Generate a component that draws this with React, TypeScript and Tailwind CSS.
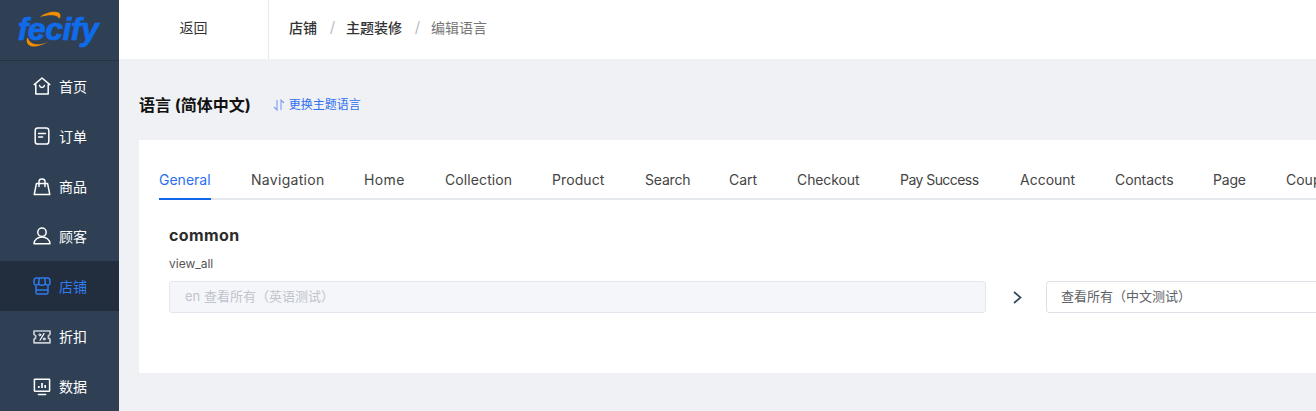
const navItems = [
  { label: '首页', icon: 'home' },
  { label: '订单', icon: 'order' },
  { label: '商品', icon: 'bag' },
  { label: '顾客', icon: 'user' },
  { label: '店铺', icon: 'store', active: true },
  { label: '折扣', icon: 'ticket' },
  { label: '数据', icon: 'chart' },
];

// widths and tracking follow the hinted text in the screenshot
const tabs = [
  { label: 'General', className: 'w-[52px] text-[#2b6ff2] border-b-2 border-[#1264e8]' },
  { label: 'Navigation', className: 'w-[73px] tracking-[0.3px]' },
  { label: 'Home', className: 'w-[41px] tracking-[0.4px]' },
  { label: 'Collection', className: 'w-[67px] tracking-[0.1px]' },
  { label: 'Product', className: 'w-[53px] tracking-[0.1px]' },
  { label: 'Search', className: 'w-[44px] -tracking-[0.2px]' },
  { label: 'Cart', className: 'w-[28px]' },
  { label: 'Checkout', className: 'w-[63px] -tracking-[0.1px]' },
  { label: 'Pay Success', className: 'w-[80px] -tracking-[0.55px]' },
  { label: 'Account', className: 'w-[55px]' },
  { label: 'Contacts', className: 'w-[58px] -tracking-[0.1px]' },
  { label: 'Page', className: 'w-[33px] -tracking-[0.2px]' },
  { label: 'Coupon', className: 'w-[60px]' },
];

function NavIcon({ name }: { name: string }) {
  const common = { fill: 'none', stroke: 'currentColor', strokeWidth: 1.5, strokeLinejoin: 'round' as const, strokeLinecap: 'round' as const };
  return (
    <svg className="w-[18px] h-[18px] shrink-0 overflow-visible" viewBox="0 0 18 18" {...common}>
      {name === 'home' && (
        <>
          <path d="M9 1 L16.8 7.6 L15.2 7.8 V17 H2.8 V7.8 L1.2 7.6 Z" />
          <path d="M6.6 8.6 C7.2 11 10.8 11 11.4 8.6" />
        </>
      )}
      {name === 'order' && (
        <>
          <rect x="2.2" y="1" width="13.6" height="16" rx="2.6" />
          <path d="M5.6 6.4 H12.4 M5.6 10 H9.6" />
        </>
      )}
      {name === 'bag' && (
        <>
          <path d="M3.4 6.6 H14.6 L16.8 17.6 H1.2 Z" />
          <path d="M6 9.4 V4.6 C6 1 12 1 12 4.6 V9.4" />
        </>
      )}
      {name === 'user' && (
        <>
          <circle cx="9" cy="5.2" r="4.2" />
          <path d="M1 16.8 C1.2 7.8 16.8 7.8 17 16.8 Z" />
        </>
      )}
      {name === 'store' && (
        <>
          <path d="M3.6 1 H14.4 C16 1 17 2.4 17 4.2 V6.2 C17 8.4 13.4 8.8 12.4 6.8 C11.6 8.8 6.4 8.8 5.6 6.8 C4.6 8.8 1 8.4 1 6.2 V4.2 C1 2.4 2 1 3.6 1 Z" />
          <path d="M6.2 1.4 L5.6 6.8 M11.8 1.4 L12.4 6.8" />
          <path d="M3 9 V15.4 C3 16.4 3.6 17 4.6 17 H13.4 C14.4 17 15 16.4 15 15.4 V9 M3.4 13 H14.6" />
        </>
      )}
      {name === 'ticket' && (
        <>
          <path d="M1 4 H17 V7.4 L15.4 8.6 V11 L17 12.2 V15.8 H1 V12.2 L2.6 11 V8.6 L1 7.4 Z" stroke="#c9ced6" strokeWidth="1.7" />
          <path d="M11 6.6 L7 13.2" strokeWidth="1.2" />
          <circle cx="6.8" cy="7.8" r="1" strokeWidth="1" />
          <circle cx="11.2" cy="12" r="1" strokeWidth="1" />
        </>
      )}
      {name === 'chart' && (
        <>
          <rect x="1.4" y="2.2" width="15.2" height="12" rx="0.4" />
          <path d="M5.4 17.6 H12.6" />
          <path d="M5.8 11 V9 M9 11 V6 M12.2 11 V8" strokeWidth="1.7" strokeLinecap="butt" />
        </>
      )}
    </svg>
  );
}

function Logo() {
  return (
    <div className="relative flex h-[61px] items-center justify-center border-b border-[#26323f] pr-[3px] pb-[2px]">
      <span className="font-['Liberation_Sans',sans-serif] text-[32px] leading-none font-bold italic tracking-[-0.5px] text-[#0f6bea] [-webkit-text-stroke:0.7px_#0f6bea]">fecify</span>
      <svg className="absolute left-[24px] top-[8px] h-[42px] w-[40px]" viewBox="0 0 40 42" fill="none">
        <path d="M16 9 C22 4 34 2 36 6 C37 8 36 10 35 11 C35 7 26 6 16 9 Z" fill="#f08c00" />
        <path d="M3 30 C1 40 12 41 24 34 C15 38 6 37 4 30 Z" fill="#f08c00" />
      </svg>
    </div>
  );
}

export default function App() {
  return (
    <div className="flex h-[411px] w-[1316px] overflow-hidden bg-[#f0f1f5] font-['Inter','Noto_Sans_CJK_SC',sans-serif]">
      <aside className="w-[119px] shrink-0 bg-[#2f4055] text-white">
        <Logo />
        <nav>
          {navItems.map((item) => (
            <div
              key={item.label}
              className={`flex h-[50px] items-center gap-[8px] pl-[33px] text-[14px] ${item.active ? 'bg-[#222e3d] text-[#2f7bf0]' : 'text-white'}`}
            >
              <NavIcon name={item.icon} />
              <span>{item.label}</span>
            </div>
          ))}
        </nav>
      </aside>

      <div className="min-w-0 flex-1">
        <header className="flex h-[59px] items-center bg-white text-[14px]">
          <div className="flex h-[59px] w-[150px] items-center justify-center border-r border-[#e8e8e8] pb-[4px] text-[#333]">返回</div>
          <div className="flex items-center pb-[4px] pl-[20px]">
            <span className="font-medium text-[#333]">店铺</span>
            <span className="w-[29px] pl-[2px] text-center text-[15px] text-[#b8bcc6]">/</span>
            <span className="font-medium text-[#333]">主题装修</span>
            <span className="w-[29px] pl-[2px] text-center text-[15px] text-[#b8bcc6]">/</span>
            <span className="text-[#777]">编辑语言</span>
          </div>
        </header>

        <main className="pl-[20px]">
          <div className="flex h-[81px] items-center gap-[22px] pt-[11px]">
            <h1 className="text-[16px] font-bold text-[#111]">语言 (简体中文)</h1>
            <a className="flex items-center gap-[4px] text-[12px] text-[#2f6ff0]">
              <svg className="h-[12px] w-[12px]" viewBox="0 0 12 12" fill="none" stroke="#7f9cf5" strokeWidth="1.1">
                <path d="M4 1 V11 L1 8 M8 11 V1 L11 4" />
              </svg>
              更换主题语言
            </a>
          </div>

          <section className="h-[233px] w-[1300px] bg-white pt-[20px]">
            <div className="ml-[20px] flex h-[40px] gap-[40px] border-b-2 border-[#e4e7ec] text-[14px] text-[#444]">
              {tabs.map((tab) => (
                <div key={tab.label} className={`-mb-[2px] h-[40px] shrink-0 whitespace-nowrap pt-[9px] ${tab.className}`}>
                  {tab.label}
                </div>
              ))}
            </div>

            <div className="pl-[30px]">
              <h2 className="mt-[24px] text-[16px] leading-[22px] font-bold tracking-[0.4px] text-[#2b2b2b]">common</h2>
              <div className="mt-[10px] text-[12px] leading-[16px] text-[#555]">view_all</div>
              <div className="mt-[9px] flex items-center">
                <div className="flex h-[32px] w-[817px] shrink-0 items-center rounded-[3px] border border-[#e4e6ee] bg-[#f5f6fa] pl-[15px] text-[13px] text-[#c0c4cc]">en 查看所有（英语测试）</div>
                <svg className="ml-[27px] h-[13px] w-[9px] shrink-0" viewBox="0 0 9 13" fill="none" stroke="#33475b" strokeWidth="1.7">
                  <path d="M1 1 L7.5 6.5 L1 12" />
                </svg>
                <div className="ml-[24px] flex h-[32px] w-[400px] shrink-0 items-center rounded-[3px] border border-[#dfe1e8] bg-white pl-[14px] text-[13px] text-[#606266]">查看所有（中文测试）</div>
              </div>
            </div>
          </section>
        </main>
      </div>
    </div>
  );
}
